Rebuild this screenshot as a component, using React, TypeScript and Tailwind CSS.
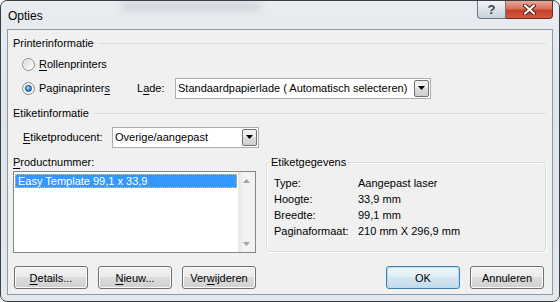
import React from 'react'

const U = ({ children }: { children: React.ReactNode }) => (
  <span className="underline decoration-1 underline-offset-[2px]">{children}</span>
)

const Radio = ({ checked }: { checked?: boolean }) => (
  <span className="flex h-[13px] w-[13px] shrink-0 items-center justify-center rounded-full border border-[#8e8f8f] bg-[linear-gradient(135deg,#d2d4d6,#f6f6f6_70%,#ffffff)] shadow-[inset_0_0_0_1px_#f4f4f4]">
    {checked && (
      <span className="h-[7px] w-[7px] rounded-full border border-[#1b4c7a] bg-[radial-gradient(circle_at_40%_35%,#bfeaff,#2f8ed8_55%,#0c4d8e)]" />
    )}
  </span>
)

const Arrow = () => (
  <span className="flex h-[17px] w-[15px] shrink-0 items-center justify-center rounded-[2px] border border-[#707070] bg-[linear-gradient(#f2f2f2,#ebebeb_45%,#dddddd_50%,#cfcfcf)]">
    <svg width="7" height="4" viewBox="0 0 7 4">
      <path d="M0 0h7L3.5 4z" fill="#000" />
    </svg>
  </span>
)

const Combo = ({ text, className }: { text: string; className: string }) => (
  <div className={`flex h-[21px] items-center border border-[#abadb3] bg-white pl-[2px] pr-px ${className}`}>
    <span className="flex-1 truncate">{text}</span>
    <Arrow />
  </div>
)

const Btn = ({ children, def }: { children: React.ReactNode; def?: boolean }) => (
  <button
    className={`flex h-[23px] w-[74px] items-center justify-center rounded-[3px] border ${
      def
        ? 'border-[#3c7fb1] bg-[linear-gradient(#eef6fb,#e3eff7_45%,#d3e5f1_50%,#c6dbe9)] shadow-[inset_0_0_0_1px_#aee1f8]'
        : 'border-[#707070] bg-[linear-gradient(#f2f2f2,#ebebeb_45%,#dddddd_50%,#cfcfcf)] shadow-[inset_0_0_0_1px_#fbfbfb]'
    }`}
  >
    {children}
  </button>
)

const Header = ({ title }: { title: string }) => (
  <div className="flex h-[14px] items-center gap-[5px] pl-[5px] pr-[6px]">
    <span>{title}</span>
    <span className="h-px flex-1 bg-[#d5dfe5]" />
  </div>
)

const ScrollArrow = ({ up }: { up?: boolean }) => (
  <span className="flex h-[17px] items-center justify-center">
    <svg width="7" height="4" viewBox="0 0 7 4">
      <path d={up ? 'M0 4h7L3.5 0z' : 'M0 0h7L3.5 4z'} fill="#a3a3a3" />
    </svg>
  </span>
)

const info = [
  ['Type:', 'Aangepast laser'],
  ['Hoogte:', '33,9 mm'],
  ['Breedte:', '99,1 mm'],
  ['Paginaformaat:', '210 mm X 296,9 mm'],
]

export default function App() {
  return (
    <div className="relative h-[302px] w-[560px] overflow-hidden rounded-[7px] border border-[#3a3f46] bg-[linear-gradient(180deg,#e9edf1,#dfe4e9_40%,#e4e8ec)] font-['Liberation_Sans',Arial,sans-serif] text-[11px] leading-[14px] text-black">
      <div className="absolute left-[120px] top-[2px] h-[7px] w-[140px] rounded-full bg-[#9aa2ab] opacity-40 blur-[4px]" />
      <div className="flex h-[28px] items-start justify-between">
        <span className="relative pl-[7px] pt-[8px] text-[12px]">Opties</span>
        <div className="relative mr-[6px] flex h-[18px]">
          <span className="flex w-[29px] items-center justify-center rounded-bl-[4px] border border-t-0 border-[#6a7684] bg-[linear-gradient(#f1f4f7,#dde3e9_50%,#c9d1da)] text-[13px] font-bold text-[#3c4651]">
            ?
          </span>
          <span className="flex w-[47px] items-center justify-center rounded-br-[4px] border border-l-0 border-t-0 border-[#6a2b22] bg-[linear-gradient(#e8a796,#d9725c_45%,#c6402a_55%,#d5583f)]">
            <svg width="13" height="11" viewBox="0 0 13 11">
              <path d="M2 1.5l9 8M11 1.5l-9 8" stroke="#4b1a12" strokeWidth="4" strokeLinecap="round" />
              <path d="M2 1.5l9 8M11 1.5l-9 8" stroke="#ffffff" strokeWidth="2.2" strokeLinecap="round" />
            </svg>
          </span>
        </div>
      </div>

      <div className="mx-[6px] flex h-[266px] flex-col border border-[#8c99a6] bg-[#f0f0f0]">
        <div className="mt-[6px]">
          <Header title="Printerinformatie" />
        </div>

        <div className="mt-[6px] flex h-[16px] items-center gap-[4px] pl-[14px]">
          <Radio />
          <span>
            <U>R</U>ollenprinters
          </span>
        </div>

        <div className="mt-[5px] flex h-[22px] items-center pl-[14px]">
          <div className="flex w-[115px] items-center gap-[4px]">
            <Radio checked />
            <span>
              Paginaprinter<U>s</U>
            </span>
          </div>
          <span className="w-[38px]">
            L<U>a</U>de:
          </span>
          <Combo text="Standaardpapierlade ( Automatisch selecteren)" className="w-[256px]" />
        </div>

        <div className="mt-[7px]">
          <Header title="Etiketinformatie" />
        </div>

        <div className="mt-[6px] flex h-[22px] items-center pl-[15px]">
          <span className="w-[89px]">
            <U>E</U>tiketproducent:
          </span>
          <Combo text="Overige/aangepast" className="w-[147px]" />
        </div>

        <div className="mt-[7px] flex pl-[5px]">
          <div className="flex w-[243px] flex-col">
            <span className="h-[14px]">
              <U>P</U>roductnummer:
            </span>
            <div className="mt-[2px] flex h-[82px] border border-[#828790] bg-white">
              <div className="flex-1 p-px">
                <div className="mt-[1px] h-[14px] border border-dotted border-[#f0c060] bg-[#3399ff] pl-[2px] leading-[12px] text-white">
                  Easy Template 99,1 x 33,9
                </div>
              </div>
              <div className="flex w-[17px] flex-col justify-between bg-[linear-gradient(90deg,#e6e6e6,#f4f4f4_40%,#f0f0f0)]">
                <ScrollArrow up />
                <ScrollArrow />
              </div>
            </div>
          </div>

          <fieldset className="ml-[10px] h-[97px] w-[280px] rounded-[3px] border border-[#d5dfe5] pl-[4px] shadow-[inset_1px_1px_0_#ffffff,1px_1px_0_#ffffff]">
            <legend className="pr-[1px] leading-[14px]">Etiketgegevens</legend>
            <div className="mt-[6px] flex flex-col pl-[3px]">
              {info.map(([k, v]) => (
                <div key={k} className="flex h-[16px] items-center">
                  <span className="w-[84px]">{k}</span>
                  <span>{v}</span>
                </div>
              ))}
            </div>
          </fieldset>
        </div>

        <div className="mt-[13px] flex items-center pl-[6px] pr-[8px]">
          <div className="flex gap-[10px]">
            <Btn>
              <U>D</U>etails...
            </Btn>
            <Btn>
              <U>N</U>ieuw...
            </Btn>
            <Btn>
              Ver<U>w</U>ijderen
            </Btn>
          </div>
          <div className="ml-auto flex gap-[10px]">
            <Btn def>OK</Btn>
            <Btn>Annuleren</Btn>
          </div>
        </div>
      </div>
    </div>
  )
}
